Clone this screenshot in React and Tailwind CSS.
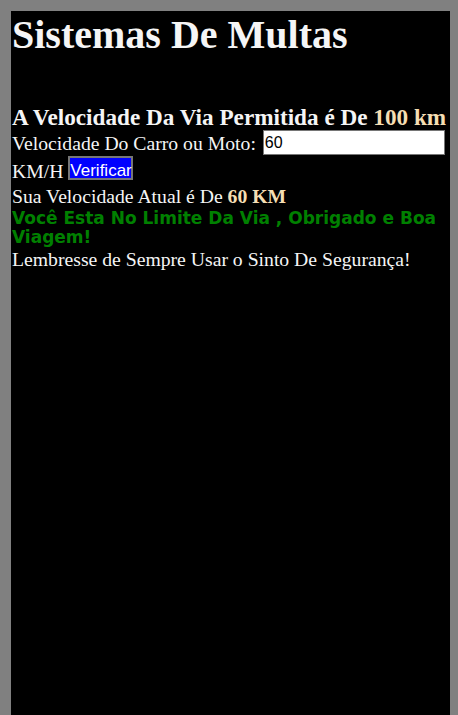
export default function App() {
  return (
    <div className="min-h-[715px] bg-[#808080] pt-[11px] pl-[11px] pr-[8px]">
      <div className="min-h-[704px] bg-black pl-px font-['Liberation_Serif',serif] text-[19.7px] text-[#f5f5f5]">
        <h1 className="text-[40px] font-bold leading-[47px]">Sistemas De Multas</h1>
        <h2 className="mt-[47px] text-[23.2px] font-bold leading-[25px] whitespace-nowrap">
          A Velocidade Da Via Permitida é De <span className="text-[#f5deb3]">100 km</span>
        </h2>
        <div className="leading-[25px]">
          Velocidade Do Carro ou Moto:{" "}
          <input
            defaultValue="60"
            className="ml-[2px] align-[2px] w-[182px] h-[25px] bg-white border border-[#767676] px-[1px] font-['Liberation_Sans',sans-serif] text-[16px] leading-normal text-black outline-none"
          />{" "}
          KM/H{" "}
          <button className="align-[2px] h-[24px] w-[65px] px-0 bg-[#0000ff] border-2 border-[#767676] font-['Liberation_Sans',sans-serif] text-[17px] leading-normal text-white">
            Verificar
          </button>
        </div>
        <p className="leading-[25px]">
          Sua Velocidade Atual é De <b className="text-[#f5deb3]">60 KM</b>
        </p>
        <p className="font-['DejaVu_Sans',sans-serif] font-bold text-[17px] leading-[19.5px] text-[#008000]">
          Você Esta No Limite Da Via , Obrigado e Boa Viagem!
        </p>
        <p className="leading-[22px]">Lembresse de Sempre Usar o Sinto De Segurança!</p>
      </div>
    </div>
  );
}
